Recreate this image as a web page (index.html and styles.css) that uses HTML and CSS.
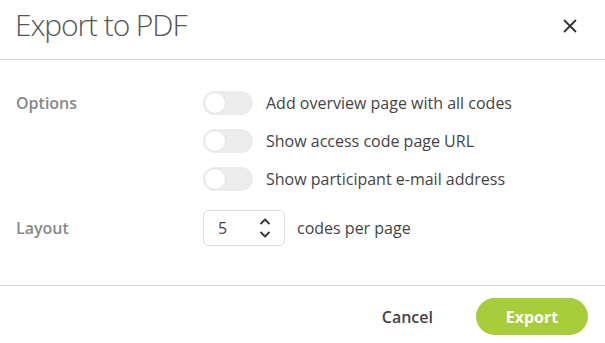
FILE: index.html
```html
<!DOCTYPE html>
<html>
<head>
  <title>Export to PDF</title>
  <link rel="stylesheet" href="styles.css">
</head>
<body>

<div class="dialog">
  <div class="dialog-header">
    <h1>Export to PDF</h1>
    <button class="close" title="Close">
      <svg width="14" height="14" viewBox="0 0 14 14"><path d="M1 1L13 13M13 1L1 13" stroke="#333" stroke-width="1.8" fill="none"/></svg>
    </button>
  </div>

  <div class="dialog-body">
    <div class="field">
      <div class="field-label">Options</div>
      <div class="field-controls options">
        <label class="option"><span class="toggle"></span>Add overview page with all codes</label>
        <label class="option"><span class="toggle"></span>Show access code page URL</label>
        <label class="option"><span class="toggle"></span>Show participant e-mail address</label>
      </div>
    </div>

    <div class="field layout">
      <div class="field-label">Layout</div>
      <div class="field-controls inline">
        <div class="number">
          <span class="number-value">5</span>
          <span class="spinner">
            <svg width="12" height="7" viewBox="0 0 12 7"><path d="M1.5 6L6 1.5L10.5 6" stroke="#333" stroke-width="1.8" fill="none"/></svg>
            <svg width="12" height="7" viewBox="0 0 12 7"><path d="M1.5 1L6 5.5L10.5 1" stroke="#333" stroke-width="1.8" fill="none"/></svg>
          </span>
        </div>
        <span class="suffix">codes per page</span>
      </div>
    </div>
  </div>

  <div class="dialog-footer">
    <button class="btn btn-cancel">Cancel</button>
    <button class="btn btn-primary">Export</button>
  </div>
</div>

</body>
</html>
```

FILE: styles.css
```css
body {
  margin: 0;
  font-family: "Open Sans", sans-serif;
  color: #444;
  background: #fff;
}

.dialog {
  width: 605px;
}

.dialog-header {
  display: flex;
  align-items: center;
  justify-content: space-between;
  padding: 5px 20px 14px 15px;
  border-bottom: solid 1px #d6d6d6;
}

.dialog-header h1 {
  margin: 0;
  font-size: 30px;
  font-weight: 300;
  line-height: 40px;
  letter-spacing: -1.1px;
  color: #555;
}

.close {
  border: 0;
  background: none;
  padding: 0;
  width: 30px;
  height: 30px;
  display: flex;
  align-items: center;
  justify-content: center;
  cursor: pointer;
  margin-top: 2px;
}

.dialog-body {
  padding: 31px 16px 39px;
}

.field {
  display: flex;
}

.field.layout {
  margin-top: 19px;
}

.field-label {
  width: 187px;
  font-size: 16px;
  font-weight: 600;
  color: #888;
  line-height: 24px;
}

.layout .field-label {
  line-height: 36px;
}

.options {
  display: flex;
  flex-direction: column;
  gap: 14px;
}

.option {
  display: flex;
  align-items: center;
  font-size: 16px;
  line-height: 24px;
}

.toggle {
  width: 50px;
  height: 24px;
  border-radius: 12px;
  background: #ececec;
  margin-right: 13px;
  display: flex;
  align-items: center;
  padding: 1px;
  box-sizing: border-box;
}

.toggle::before {
  content: "";
  width: 20px;
  height: 20px;
  border-radius: 50%;
  background: #fff;
  border: solid 1px #e2e2e2;
}

.inline {
  display: flex;
  align-items: center;
}

.number {
  width: 82px;
  height: 36px;
  box-sizing: border-box;
  border: solid 1px #ddd;
  border-radius: 5px;
  display: flex;
  align-items: center;
  justify-content: space-between;
  padding: 0 13px 0 14px;
  font-size: 16px;
  color: #444;
}

.spinner {
  display: flex;
  flex-direction: column;
  gap: 6px;
}

.spinner svg {
  display: block;
}

.suffix {
  font-size: 16px;
  margin-left: 12px;
}

.dialog-footer {
  display: flex;
  justify-content: flex-end;
  align-items: center;
  padding: 12px 17px 8px;
  border-top: solid 1px #d6d6d6;
}

.btn {
  font-family: "Open Sans", sans-serif;
  font-size: 16px;
  font-weight: 600;
  height: 37px;
  border: 0;
  border-radius: 19px;
  cursor: pointer;
}

.btn-cancel {
  background: none;
  color: #444;
  padding: 0 20px;
  margin-right: 23px;
}

.btn-primary {
  width: 112px;
  background: #a8cd3a;
  color: #fff;
  font-weight: 700;
}
```
